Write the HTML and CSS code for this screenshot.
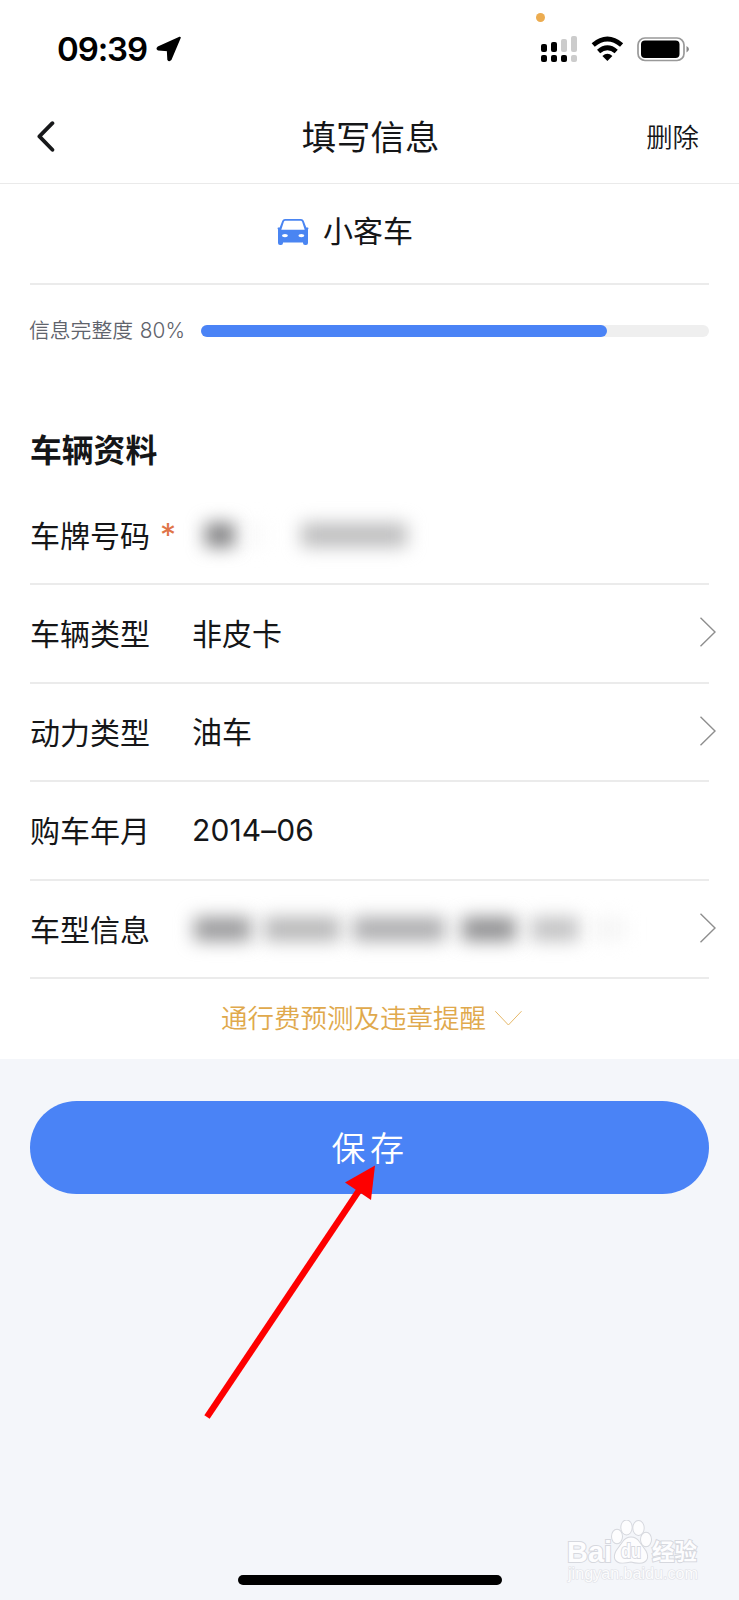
FILE: index.html
```
<!DOCTYPE html>
<html lang="zh-CN">

<head>
  <meta charset="UTF-8">
  <meta name="viewport" content="width=device-width, initial-scale=1.0">
  <title>填写信息</title>
  <link rel="stylesheet" href="styles.css">
</head>

<body>
  <div class="page">
    <!-- Status bar -->
    <div class="status-bar">
      <span class="time">09:39</span>
      <svg class="location" width="26" height="26" viewBox="0 0 26 26">
        <path d="M23.8 1.7 L14.6 23.4 Q13.2 25 12.3 23.4 L11.8 14.2 L2.2 13.5 Q.8 12.6 2.2 11.4 Z" fill="#000" stroke="#000" stroke-width="2" stroke-linejoin="round"/>
      </svg>
      <span class="mic-dot"></span>
      <svg class="signals" width="152" height="28" viewBox="0 0 152 28">
        <g fill="#000">
          <rect x="1" y="9" width="6" height="8" rx="2"/>
          <rect x="11" y="7" width="6" height="10" rx="2"/>
          <rect x="1" y="20" width="6" height="7" rx="2"/>
          <rect x="11" y="20" width="6" height="7" rx="2"/>
          <rect x="21" y="20" width="6" height="7" rx="2"/>
        </g>
        <g fill="#ccc">
          <rect x="21" y="4" width="6" height="13" rx="2"/>
          <rect x="31" y="1" width="6" height="16" rx="2"/>
          <rect x="31" y="20" width="6" height="7" rx="2"/>
        </g>
        <g fill="none" stroke="#000" stroke-width="4.8">
          <path d="M53.2 10 Q67.4 -2 81.6 10"/>
          <path d="M58.6 16.5 Q67.4 9 76.2 16.5"/>
        </g>
        <path d="M62.4 21 Q67.4 16.6 72.4 21 L67.4 26 Z" fill="#000"/>
        <rect x="98" y="3" width="46" height="22.5" rx="7" fill="none" stroke="#999" stroke-width="1.7"/>
        <rect x="101" y="5.5" width="38.5" height="17.5" rx="4" fill="#000"/>
        <path d="M146.5 11 Q151.5 14.2 146.5 17.5 Z" fill="#888"/>
      </svg>
    </div>

    <!-- Title bar -->
    <div class="nav">
      <svg class="back" width="20" height="32" viewBox="0 0 20 32">
        <path d="M15.4 3.2 L2.4 16.4 L15.4 29.8" fill="none" stroke="#17181a" stroke-width="3.8" stroke-linecap="round" stroke-linejoin="round"/>
      </svg>
      <h1>填写信息</h1>
      <span class="delete">删除</span>
    </div>

    <div class="car-type">
      <svg width="32" height="28" viewBox="0 0 32 28">
        <path fill="#4a85f2" fill-rule="evenodd" d="M8 1 H24 Q26 1 26.7 2.8 L29.3 9.6 H31 Q32 10.4 31 11.4 V25 Q31 27 29 27 H28 Q26 27 26 25 V24.5 H6 V25 Q6 27 4 27 H3 Q1 27 1 25 V11.4 Q0 10.4 1 9.6 H2.7 L5.3 2.8 Q6 1 8 1 Z M8.3 2.8 Q7.3 2.8 6.9 3.8 L4.3 11.8 H27.7 L25.1 3.8 Q24.7 2.8 23.7 2.8 Z"/>
        <ellipse cx="8" cy="17.6" rx="2.9" ry="1.7" fill="#fff"/>
        <ellipse cx="24.4" cy="17.6" rx="2.9" ry="1.7" fill="#fff"/>
      </svg>
      <span>小客车</span>
    </div>

    <div class="progress">
      <span class="progress-label">信息完整度 <span class="num">80%</span></span>
      <div class="track">
        <div class="fill" style="width: 80%"></div>
      </div>
    </div>

    <!-- Vehicle form -->
    <div class="form">
      <h2>车辆资料</h2>
      <div class="row first">
        <span class="label">车牌号码</span><span class="required">*</span>
        <div class="hidden-value plate"><i class="a"></i><i class="b"></i><i class="c"></i></div>
      </div>
      <div class="row">
        <span class="label">车辆类型</span>
        <span class="value">非皮卡</span>
        <svg class="arrow" width="18" height="30" viewBox="0 0 18 30"><path d="M1.5 .8 L16 15 L1.5 29.2"/></svg>
      </div>
      <div class="row">
        <span class="label">动力类型</span>
        <span class="value">油车</span>
        <svg class="arrow" width="18" height="30" viewBox="0 0 18 30"><path d="M1.5 .8 L16 15 L1.5 29.2"/></svg>
      </div>
      <div class="row">
        <span class="label">购车年月</span>
        <span class="value num">2014–06</span>
      </div>
      <div class="row">
        <span class="label">车型信息</span>
        <div class="hidden-value model"><i class="d"></i><i class="e"></i><i class="f"></i><i class="g"></i><i class="h"></i><i class="j"></i></div>
        <svg class="arrow" width="18" height="30" viewBox="0 0 18 30"><path d="M1.5 .8 L16 15 L1.5 29.2"/></svg>
      </div>
      <div class="more">
        <span>通行费预测及违章提醒</span>
        <svg width="30" height="18" viewBox="0 0 30 18"><path d="M.3 3.2 L13.4 17 L26.5 3.2" fill="none" stroke="#e6b868" stroke-width="1"/></svg>
      </div>
    </div>

    <button class="save">保存</button>

    <div class="home-bar"></div>

    <!-- Pointer to the save button -->
    <svg class="pointer" width="180" height="260" viewBox="0 0 180 260">
      <path d="M7 257 L160 29" stroke="#fe0000" stroke-width="6.4"/>
      <path d="M175 5.5 L145 22.5 L171 40 Z" fill="#fe0000"/>
    </svg>

    <!-- Watermark -->
    <svg class="watermark" width="140" height="68" viewBox="0 0 140 68">
      <g fill="#fdfdfe" stroke="#d6d8de" stroke-width="2" paint-order="stroke">
        <text class="logo" x="7" y="41.5" textLength="45" lengthAdjust="spacingAndGlyphs">Bai</text>
        <ellipse cx="57" cy="16.5" rx="5" ry="6.8"/>
        <ellipse cx="66.5" cy="7.5" rx="5.2" ry="7"/>
        <ellipse cx="78.5" cy="8" rx="5.2" ry="7"/>
        <ellipse cx="86" cy="19.5" rx="5" ry="6.8"/>
        <path d="M71 17.5 Q76 17.5 79 22 L85.5 31 Q90 40 82 42.5 Q76 43 71 41.5 Q65 43 60 42.5 Q52 40 56.5 31 L63 22 Q66 17.5 71 17.5 Z"/>
        <text class="du" x="61" y="38" textLength="20" lengthAdjust="spacingAndGlyphs">du</text>
        <text class="cn" x="92" y="40" textLength="45" lengthAdjust="spacingAndGlyphs">经验</text>
      </g>
      <text class="url" x="8" y="59" textLength="130" lengthAdjust="spacingAndGlyphs">jingyan.baidu.com</text>
    </svg>
  </div>
</body>

</html>
```
FILE: styles.css
```
* {
  box-sizing: border-box;
}

body {
  margin: 0;
  font-family: "Noto Sans CJK SC", sans-serif;
  font-weight: 350;
  color: #151618;
  background-color: #f4f6fa;
}

svg {
  display: block;
  flex-shrink: 0;
}

.page {
  position: relative;
  width: 739px;
  height: 1600px;
  display: flex;
  flex-direction: column;
  overflow: hidden;
}

.num {
  font-family: Inter, sans-serif;
}

/* Status bar */
.status-bar {
  height: 90px;
  padding: 35px 47px 0 57px;
  display: flex;
  align-items: flex-start;
  background-color: #fff;
}

.time {
  width: 99px;
  font-family: Inter, sans-serif;
  font-size: 33px;
  font-weight: 600;
  line-height: 28px;
  letter-spacing: -1.1px;
  color: #000;
}

.location {
  margin-top: 1px;
}

.signals {
  margin-left: auto;
}

.mic-dot {
  position: absolute;
  left: 536px;
  top: 13px;
  width: 9px;
  height: 9px;
  border-radius: 50%;
  background-color: #ecac50;
}

/* Title bar */
.nav {
  height: 94px;
  padding: 0 40px 2px 37px;
  display: grid;
  grid-template-columns: 1fr auto 1fr;
  align-items: center;
  background-color: #fff;
  border-bottom: 1px solid #eaeaea;
}

h1 {
  margin: 0;
  padding: 0 0 2px 5px;
  font-size: 34.4px;
  font-weight: 400;
  line-height: 40px;
}

.delete {
  justify-self: end;
  font-size: 26.4px;
  line-height: 40px;
}

.car-type {
  height: 101px;
  padding: 0 0 6px 277px;
  display: flex;
  align-items: center;
  gap: 14px;
  background-color: #fff;
  background-image: linear-gradient(#ebebeb, #ebebeb);
  background-size: 679px 2px;
  background-position: 30px 99px;
  background-repeat: no-repeat;
  font-size: 30px;
  font-weight: 400;
}

.car-type span {
  padding-bottom: 5px;
}

/* Completeness */
.progress {
  height: 105px;
  padding: 34px 30px 0 29px;
  display: flex;
  align-items: flex-start;
  background-color: #fff;
}

.progress-label {
  width: 172px;
  margin-top: -1px;
  font-size: 20.8px;
  line-height: 22px;
  color: #5f636c;
  white-space: nowrap;
}

.progress-label .num {
  margin-left: 2px;
  letter-spacing: 0.2px;
}

.track {
  flex: 1;
  height: 12px;
  margin-top: 6px;
  border-radius: 6px;
  background-color: #efefef;
}

.fill {
  height: 12px;
  border-radius: 6px;
  background-color: #4a83f6;
}

/* Form rows */
.form {
  height: 669px;
  padding: 39px 30px 0;
  background-color: #fff;
}

h2 {
  margin: 0;
  height: 57px;
  font-size: 31.8px;
  font-weight: 700;
  line-height: 38px;
}

.row {
  height: 98.6px;
  display: flex;
  align-items: center;
  border-bottom: 2px solid #ebebeb;
  font-size: 30px;
  font-weight: 400;
}

.row.first {
  height: 99px;
}

.label {
  width: 162px;
  padding-bottom: 2px;
}

.value {
  padding-bottom: 3px;
}

.value.num {
  padding-bottom: 0;
  letter-spacing: 0.1px;
}

.first .label {
  width: 130px;
}

.required {
  width: 33px;
  padding-top: 2px;
  font-family: Inter, sans-serif;
  font-size: 32px;
  color: #e07448;
}

.arrow {
  margin: 0 -8px 2px auto;
}

.arrow path {
  fill: none;
  stroke: #8e8e8e;
  stroke-width: 1.4;
}

/* Masked values */
.hidden-value {
  display: flex;
  align-items: center;
}

.hidden-value i {
  height: 24px;
  filter: blur(9px);
}

.a { width: 30px; margin-left: 12px; background-color: #7f7f81; }
.b { width: 12px; margin-left: 16px; background-color: #f7f7f7; }
.c { width: 106px; margin-left: 38px; background-color: #bcbcbd; }
.d { width: 57px; margin-left: 2px; background-color: #99999b; }
.e { width: 76px; margin-left: 13px; background-color: #b6b6b7; }
.f { width: 92px; margin-left: 13px; background-color: #acacae; }
.g { width: 54px; margin-left: 17px; background-color: #8f8f91; }
.h { width: 48px; margin-left: 15px; background-color: #c2c2c3; }
.j { width: 32px; margin-left: 14px; background-color: #f5f5f5; }

.more {
  height: 78px;
  padding: 0 0 3px 191px;
  display: flex;
  align-items: center;
  gap: 9px;
  font-size: 26.5px;
  color: #e0a94c;
}

.save {
  height: 93px;
  margin: 42px 30px 0;
  padding: 0 0 2px 1px;
  border: none;
  border-radius: 47px;
  background-color: #4a83f6;
  font-family: inherit;
  font-size: 34px;
  font-weight: 350;
  letter-spacing: 4.5px;
  color: #fff;
}

.home-bar {
  width: 264px;
  height: 10px;
  margin: auto auto 15px;
  border-radius: 5px;
  background-color: #000;
}

.pointer {
  position: absolute;
  left: 200px;
  top: 1160px;
}

.watermark {
  position: absolute;
  left: 560px;
  top: 1520px;
}

.logo, .du {
  font-family: "Liberation Sans", sans-serif;
  font-weight: 700;
  font-size: 29px;
}

.du {
  font-size: 20px;
}

.cn {
  font-weight: 700;
  font-size: 23px;
}

.url {
  font-family: "Liberation Sans", sans-serif;
  font-size: 16px;
  fill: #fcfcfd;
  stroke: #dfe1e6;
  stroke-width: 1.2;
  paint-order: stroke;
}
```
